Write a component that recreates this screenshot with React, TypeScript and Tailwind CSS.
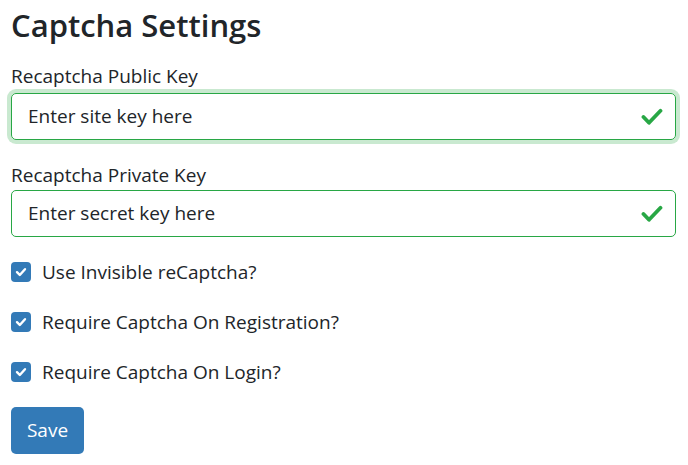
import React from "react";

const Check = () => (
  <svg width="22" height="18" viewBox="0 0 22 18" fill="none">
    <path d="M2.5 9 L8 14.8 L19.5 2.8" stroke="#28a745" strokeWidth="3.8" strokeLinecap="round" strokeLinejoin="round" />
  </svg>
);

const Box = () => (
  <span className="w-[20px] h-[20px] rounded-[4px] bg-[#337ab7] flex items-center justify-center shrink-0">
    <svg width="12" height="10" viewBox="0 0 12 10" fill="none">
      <path d="M2 5.2 L4.8 8 L10 2.2" stroke="white" strokeWidth="2.4" strokeLinecap="round" strokeLinejoin="round" />
    </svg>
  </span>
);

export default function App() {
  const font = { fontFamily: '"Open Sans", "Noto Sans", sans-serif' };
  return (
    <div className="bg-white w-[688px] h-[465px] pl-[11px] pr-[12px] text-[#212529]" style={font}>
      <h2 className="text-[31px] font-semibold leading-[48px] pt-[1px]">Captcha Settings</h2>
      <div className="mt-[14px] text-[19px] leading-[26px]">Recaptcha Public Key</div>
      <div className="mt-[4px] h-[47px] border border-[#28a745] rounded-[5px] shadow-[0_0_0_4px_rgba(40,167,69,0.25)] flex items-center justify-between pl-[16px] pr-[12px] text-[19px]">
        <span>Enter site key here</span>
        <Check />
      </div>
      <div className="mt-[22px] text-[19px] leading-[26px]">Recaptcha Private Key</div>
      <div className="mt-[2px] h-[47px] border border-[#28a745] rounded-[5px] flex items-center justify-between pl-[16px] pr-[12px] text-[19px]">
        <span>Enter secret key here</span>
        <Check />
      </div>
      <div className="mt-[25px] flex flex-col gap-[30px] text-[19px]">
        {["Use Invisible reCaptcha?", "Require Captcha On Registration?", "Require Captcha On Login?"].map((t) => (
          <div key={t} className="flex items-center gap-[11px] h-[20px]">
            <Box />
            <span className="leading-[26px]">{t}</span>
          </div>
        ))}
      </div>
      <button className="mt-[25px] w-[73px] h-[47px] bg-[#337ab7] text-white rounded-[5px] text-[19px]">Save</button>
    </div>
  );
}
